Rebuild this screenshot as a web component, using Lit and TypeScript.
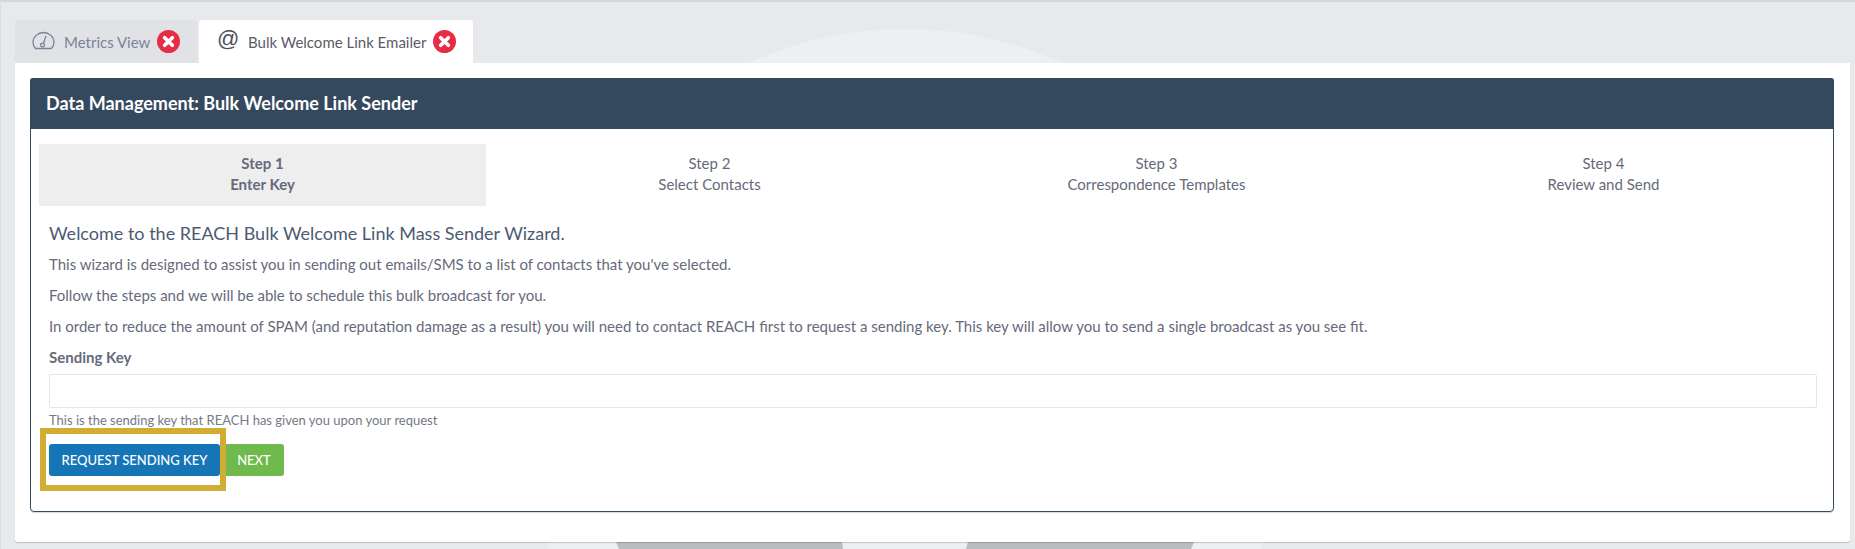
import { LitElement, html, css, svg } from "lit";
import { customElement } from "lit/decorators.js";

const closeIcon = html`<svg class="x" viewBox="0 0 24 24" aria-hidden="true">
  <circle cx="12" cy="12" r="12" fill="#e72d45"></circle>
  <path d="M8 8l8 8M16 8l-8 8" stroke="#fff" stroke-width="3.8" stroke-linecap="round" fill="none"></path>
</svg>`;

const gauge = svg`<path d="M3.500 17.500C2 16 1 13.800 1 11.300 1 5.900 5.900 1.500 11.500 1.500S22 5.900 22 11.300c0 2.500-1 4.700-2.500 6.200z" fill="none" stroke="currentColor" stroke-width="1.300"></path>
  <circle cx="10.500" cy="14" r="1.900" fill="none" stroke="currentColor" stroke-width="1.300"></circle>
  <path d="M11.500 12.300L14 5" fill="none" stroke="currentColor" stroke-width="1.300"></path>`;

@customElement("app-root")
export class AppRoot extends LitElement {
  static styles = css`
    :host {
      display: block;
      position: relative;
      height: 549px;
      overflow: hidden;
      box-sizing: border-box;
      background: #e8e9ec;
      border-top: 2px solid #d5d6da;
      border-left: 1px solid #dcdde0;
      font-family: "Lato", sans-serif;
      font-size: 15px;
      color: #676a7a;
    }
    .bg {
      position: absolute;
      left: -1px;
      top: -2px;
      width: 1855px;
      height: 549px;
    }
    .page {
      position: relative;
      padding: 18px 5px 0 14px;
    }
    .tabs {
      display: flex;
      gap: 2px;
      height: 43px;
    }
    .tab {
      display: flex;
      align-items: center;
      box-sizing: border-box;
      border-radius: 3px 3px 0 0;
      height: 43px;
      white-space: nowrap;
    }
    .tab.off {
      width: 182px;
      background: #e1e2e6;
      color: #7a8499;
      padding-left: 17px;
    }
    .tab.off .x {
      margin-left: 7px;
    }
    .tab.on {
      width: 274px;
      background: #fff;
      color: #5a5c66;
      padding-left: 18px;
    }
    .gauge {
      width: 23px;
      height: 19px;
      margin-right: 9px;
      margin-top: -3px;
      flex: none;
    }
    .at {
      font-size: 22px;
      line-height: 26px;
      width: 31px;
      margin-top: -6px;
      color: #4e5058;
      font-family: "Liberation Sans", sans-serif;
      font-weight: 400;
    }
    .x {
      width: 23px;
      height: 23px;
      flex: none;
      margin-left: 7px;
    }
    .card {
      background: #fff;
      height: 479px;
      box-sizing: border-box;
      padding: 15px 16px 0 15px;
      border-radius: 0 0 3px 3px;
      box-shadow: 0 1px 1px rgba(0, 0, 0, 0.18);
    }
    .panel {
      border: 1px solid #34495e;
      border-radius: 4px;
      height: 434px;
      box-sizing: border-box;
      box-shadow: 0 1px 1px rgba(0, 0, 0, 0.15);
    }
    .head {
      background: #34495e;
      color: #fff;
      font-weight: 700;
      font-size: 18px;
      height: 51px;
      line-height: 50px;
      padding-left: 16px;
      margin: -1px -1px 0;
      border-radius: 3px 3px 0 0;
    }
    .body {
      padding: 15px 6px 0 8px;
    }
    .steps {
      display: grid;
      grid-template-columns: repeat(4, 447px);
    }
    .step {
      height: 62px;
      text-align: center;
      line-height: 21px;
      padding-top: 9px;
      box-sizing: border-box;
    }
    .step.cur {
      background: #eeeeee;
      font-weight: 700;
    }
    .content {
      padding: 0 10px;
    }
    h3 {
      margin: 15px 0 0;
      font-size: 18px;
      font-weight: 400;
      line-height: 24px;
      color: #4d5a72;
    }
    p {
      margin: 0;
      line-height: 21px;
      margin-top: 10px;
    }
    h3 + p {
      margin-top: 9px;
    }
    label {
      display: block;
      font-weight: 700;
      line-height: 20px;
      margin-top: 10px;
    }
    .input {
      display: block;
      box-sizing: border-box;
      width: 100%;
      height: 34px;
      margin-top: 7px;
      border: 1px solid #e5e6e7;
      border-radius: 2px;
      background: #fff;
      outline: none;
    }
    .hint {
      font-size: 13px;
      line-height: 16px;
      margin-top: 4px;
      color: #767986;
    }
    .actions {
      display: flex;
      margin-top: 16px;
      position: relative;
    }
    button {
      font: 500 13px "Lato", sans-serif;
      color: #fff;
      border: none;
      height: 32px;
      padding: 0;
      border-radius: 3px;
      text-transform: uppercase;
    }
    .blue {
      width: 171px;
      background: #1675b6;
    }
    .ring {
      position: absolute;
      left: -9px;
      top: -16px;
      width: 186px;
      height: 63px;
      box-sizing: border-box;
      border: 6px solid #d2ad33;
      pointer-events: none;
    }
    .green {
      width: 60px;
      margin-left: 4px;
      background: #6fb94d;
    }
  `;

  render() {
    return html`
      <svg class="bg" viewBox="0 0 1855 549" aria-hidden="true">
        <rect x="0" y="0" width="927" height="549" fill="#e8e9ed"></rect>
        <rect x="927" y="0" width="928" height="549" fill="#e8e9ea"></rect>
        <circle cx="905" cy="411" r="382" fill="#eeeff1"></circle>
        <path d="M616 542L842 542L843 549L619 549z" fill="#bbbcbe"></path>
        <path d="M968 542L1194 542L1191 549L966 549z" fill="#bbbcbe"></path>
      </svg>
      <div class="page">
        <div class="tabs">
          <div class="tab off">
            <svg class="gauge" viewBox="0 0 23 19" aria-hidden="true">${gauge}</svg>
            <span>Metrics View</span>
            ${closeIcon}
          </div>
          <div class="tab on">
            <span class="at">@</span>
            <span>Bulk Welcome Link Emailer</span>
            ${closeIcon}
          </div>
        </div>
        <div class="card">
          <div class="panel">
            <div class="head">Data Management: Bulk Welcome Link Sender</div>
            <div class="body">
              <div class="steps">
                <div class="step cur"><div>Step 1</div><div>Enter Key</div></div>
                <div class="step"><div>Step 2</div><div>Select Contacts</div></div>
                <div class="step"><div>Step 3</div><div>Correspondence Templates</div></div>
                <div class="step"><div>Step 4</div><div>Review and Send</div></div>
              </div>
              <div class="content">
                <h3>Welcome to the REACH Bulk Welcome Link Mass Sender Wizard.</h3>
                <p>This wizard is designed to assist you in sending out emails/SMS to a list of contacts that you've selected.</p>
                <p>Follow the steps and we will be able to schedule this bulk broadcast for you.</p>
                <p>In order to reduce the amount of SPAM (and reputation damage as a result) you will need to contact REACH first to request a sending key. This key will allow you to send a single broadcast as you see fit.</p>
                <label>Sending Key</label>
                <input class="input" type="text" />
                <div class="hint">This is the sending key that REACH has given you upon your request</div>
                <div class="actions">
                  <button class="blue">Request Sending Key</button>
                  <button class="green">Next</button>
                  <div class="ring"></div>
                </div>
              </div>
            </div>
          </div>
        </div>
      </div>
    `;
  }
}
